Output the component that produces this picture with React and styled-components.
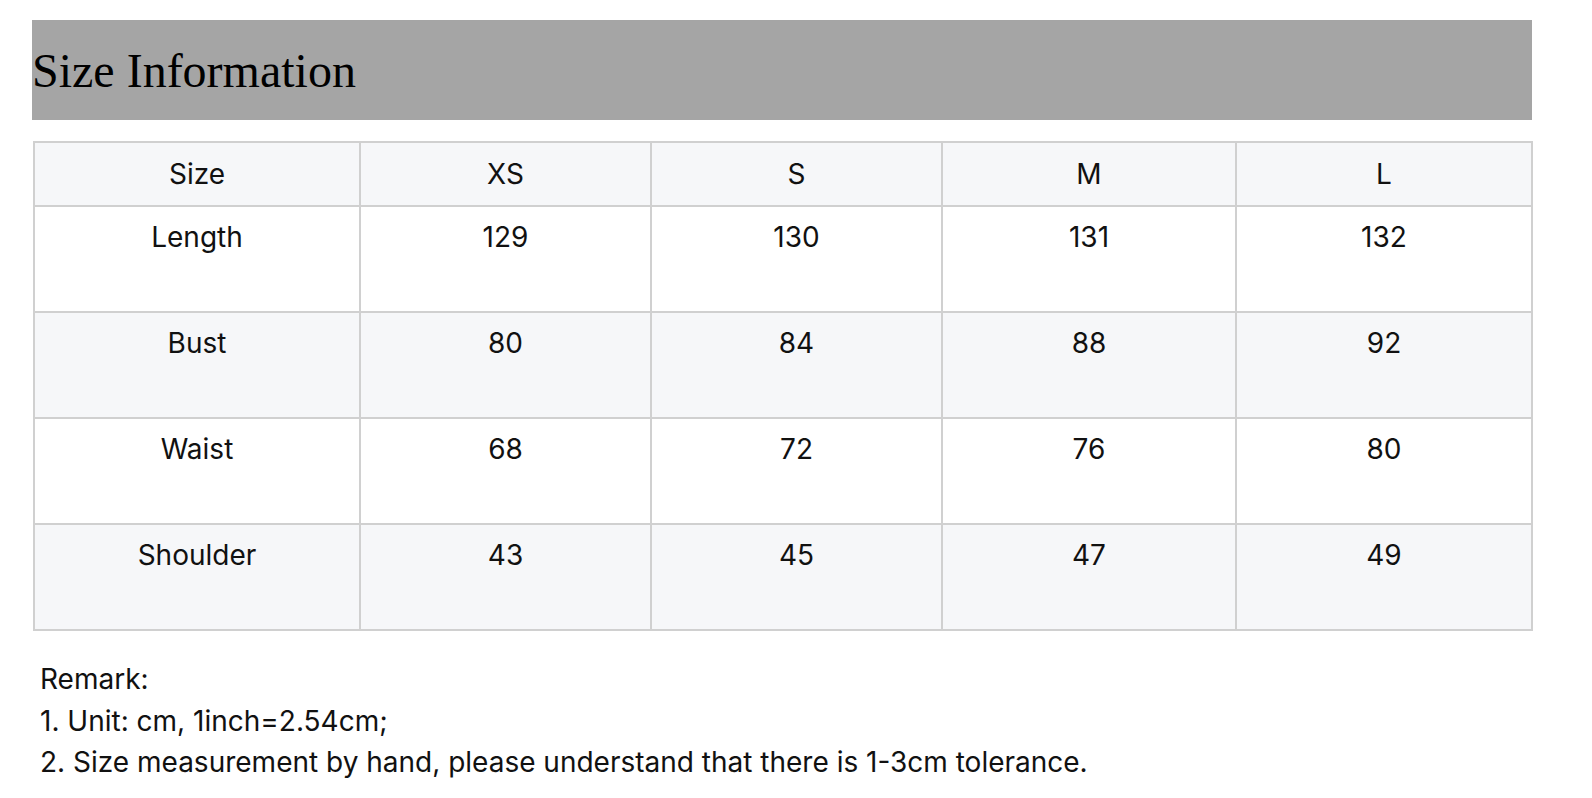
import React from "react";
import styled, { createGlobalStyle } from "styled-components";

const GlobalStyle = createGlobalStyle`
  body {
    margin: 0;
    background: #ffffff;
  }
`;

const columns = ["Size", "XS", "S", "M", "L"];
const colWidths = [326, 291, 291, 294, 296];

const rows = [
  { label: "Length", values: [129, 130, 131, 132] },
  { label: "Bust", values: [80, 84, 88, 92] },
  { label: "Waist", values: [68, 72, 76, 80] },
  { label: "Shoulder", values: [43, 45, 47, 49] },
];

export default function App() {
  return (
    <>
      <GlobalStyle />
      <Page>
        <TitleBar>
          <h1>Size Information</h1>
        </TitleBar>
        <SizeTable>
          <colgroup>
            {colWidths.map((w, i) => (
              <col key={i} style={{ width: w }} />
            ))}
          </colgroup>
          <thead>
            <tr>
              {columns.map((c) => (
                <HeadCell key={c}>{c}</HeadCell>
              ))}
            </tr>
          </thead>
          <tbody>
            {rows.map((row, i) => (
              <BodyRow key={row.label} $striped={i % 2 === 1}>
                <BodyCell>{row.label}</BodyCell>
                {row.values.map((v, j) => (
                  <BodyCell key={j}>{v}</BodyCell>
                ))}
              </BodyRow>
            ))}
          </tbody>
        </SizeTable>
        <Remarks>
          <p>Remark:</p>
          <p>1. Unit: cm, 1inch=2.54cm;</p>
          <p>2. Size measurement by hand, please understand that there is 1-3cm tolerance.</p>
        </Remarks>
      </Page>
    </>
  );
}

const Page = styled.div`
  width: 1500px;
  padding: 20px 0 0 32px;
  font-family: Inter, "Noto Sans", sans-serif;
  color: #111111;
`;

const TitleBar = styled.div`
  background-color: #a5a5a5;
  padding: 24px 0 23px;
  h1 {
    margin: 0;
    font-family: "Liberation Serif", serif;
    font-size: 48px;
    font-weight: normal;
    line-height: 53px;
    color: #000000;
  }
`;

const SizeTable = styled.table`
  width: 1498px;
  margin: 21px 0 0 1px;
  border-collapse: collapse;
  table-layout: fixed;
  font-size: 28px;
  border: 2px solid #d0d0d0;
`;

const HeadCell = styled.th`
  height: 64px;
  padding: 0 12px;
  box-sizing: border-box;
  background-color: #f6f7f9;
  border: 2px solid #d0d0d0;
  font-weight: normal;
  text-align: center;
  vertical-align: middle;
  line-height: 40px;
`;

const BodyRow = styled.tr`
  height: 106px;
  background-color: ${(p) => (p.$striped ? "#f6f7f9" : "#ffffff")};
`;

const BodyCell = styled.td`
  padding: 10px 12px 0;
  border: 2px solid #d0d0d0;
  text-align: center;
  vertical-align: top;
  line-height: 40px;
`;

const Remarks = styled.div`
  margin-top: 28px;
  padding-left: 8px;
  font-size: 28px;
  line-height: 41.5px;
  p {
    margin: 0;
  }
`;
